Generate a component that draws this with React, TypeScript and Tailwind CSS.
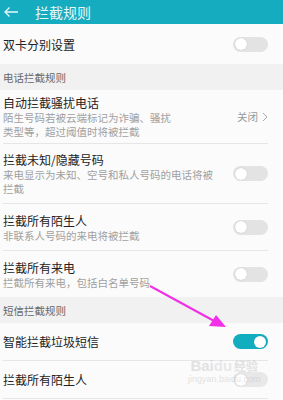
import React from "react";

const font = { fontFamily: '"Noto Sans CJK SC", "Noto Sans", sans-serif' };

function Toggle({ on = false, faded = false }: { on?: boolean; faded?: boolean }) {
  return (
    <div
      className={`relative w-[35px] h-[15px] rounded-full shrink-0 ${on ? "bg-[#12aebf]" : faded ? "bg-[#e8e8e8]" : "bg-[#e3e3e3]"}`}
    >
      <div
        className={`absolute top-[1.5px] w-[12px] h-[12px] rounded-full bg-white shadow-[0_0_1px_rgba(0,0,0,0.25)] ${on ? "right-[2px]" : "left-[2px]"}`}
      />
    </div>
  );
}

function Row({
  title,
  sub,
  h,
  right,
  divider = true,
}: {
  title: string;
  sub?: React.ReactNode;
  h: string;
  right: React.ReactNode;
  divider?: boolean;
}) {
  return (
    <div className={`flex flex-col pl-[3px] pr-[15px] bg-[#fbfbfb] ${h}`}>
      <div className="flex flex-1 items-center">
        <div className="flex flex-1 flex-col">
          <div className="text-[12px] leading-[17px] text-[#222]">{title}</div>
          {sub && <div className="text-[10.5px] leading-[14px] text-[#a0a0a0] whitespace-nowrap">{sub}</div>}
        </div>
        {right}
      </div>
      {divider && <div className="h-px bg-[#e6e6e6]" />}
    </div>
  );
}

function Section({ label, h }: { label: string; h: string }) {
  return (
    <div className={`flex items-end pl-[3px] pb-[5px] bg-[#f1f1f1] ${h}`}>
      <span className="text-[10.5px] leading-[14px] text-[#666]">{label}</span>
    </div>
  );
}

export default function App() {
  return (
    <div className="relative w-[283px] h-[400px] overflow-hidden bg-[#fbfbfb]" style={font}>
      <div className="flex items-center h-[24px] bg-[#16acc0]">
        <svg width="16" height="12" viewBox="0 0 16 12" className="ml-[3px]">
          <path d="M15 6H2M6.5 1.5L2 6l4.5 4.5" fill="none" stroke="#e8f8fa" strokeWidth="1.3" />
        </svg>
        <span className="ml-[16px] text-[14px] leading-[18px] text-[#e6f7f9]">拦截规则</span>
      </div>

      <Row title="双卡分别设置" h="h-[40px]" right={<Toggle />} divider={false} />
      <Section label="电话拦截规则" h="h-[26px]" />
      <Row
        title="自动拦截骚扰电话"
        sub={
          <>
            陌生号码若被云端标记为诈骗、骚扰
            <br />
            类型等，超过阈值时将被拦截
          </>
        }
        h="h-[54px]"
        right={
          <div className="flex items-center gap-[4px] text-[10.5px] text-[#999]">
            <span>关闭</span>
            <svg width="6" height="10" viewBox="0 0 6 10">
              <path d="M1 1l4 4-4 4" fill="none" stroke="#aaa" strokeWidth="1" />
            </svg>
          </div>
        }
      />
      <Row
        title="拦截未知/隐藏号码"
        sub={
          <>
            来电显示为未知、空号和私人号码的电话将被
            <br />
            拦截
          </>
        }
        h="h-[60px]"
        right={<Toggle />}
      />
      <Row title="拦截所有陌生人" sub="非联系人号码的来电将被拦截" h="h-[47px]" right={<Toggle />} />
      <Row title="拦截所有来电" sub="拦截所有来电，包括白名单号码" h="h-[46px]" right={<Toggle />} divider={false} />
      <Section label="短信拦截规则" h="h-[26px]" />
      <Row title="智能拦截垃圾短信" h="h-[38px]" right={<Toggle on />} />
      <Row title="拦截所有陌生人" h="h-[38px]" right={<Toggle faded />} />

      <div className="absolute left-[188px] top-[358px] flex flex-col items-center opacity-40 pointer-events-none">
        <div className="flex items-center text-[15px] leading-[16px] font-bold text-[#bbb]" style={{ fontFamily: '"Liberation Sans", sans-serif' }}>
          <span>Bai</span>
          <span className="text-[#ccc]">du</span>
          <span className="text-[12px] ml-[2px]" style={font}>经验</span>
        </div>
        <div className="text-[9px] leading-[11px] text-[#bbb]" style={{ fontFamily: '"Liberation Sans", sans-serif' }}>jingyan.baidu.com</div>
      </div>

      <svg className="absolute left-0 top-0 pointer-events-none" width="283" height="400">
        <line x1="150" y1="286" x2="216" y2="322" stroke="#f22ee8" strokeWidth="2" />
        <polygon points="226,327 209,326 216,315" fill="#f22ee8" />
      </svg>
    </div>
  );
}
